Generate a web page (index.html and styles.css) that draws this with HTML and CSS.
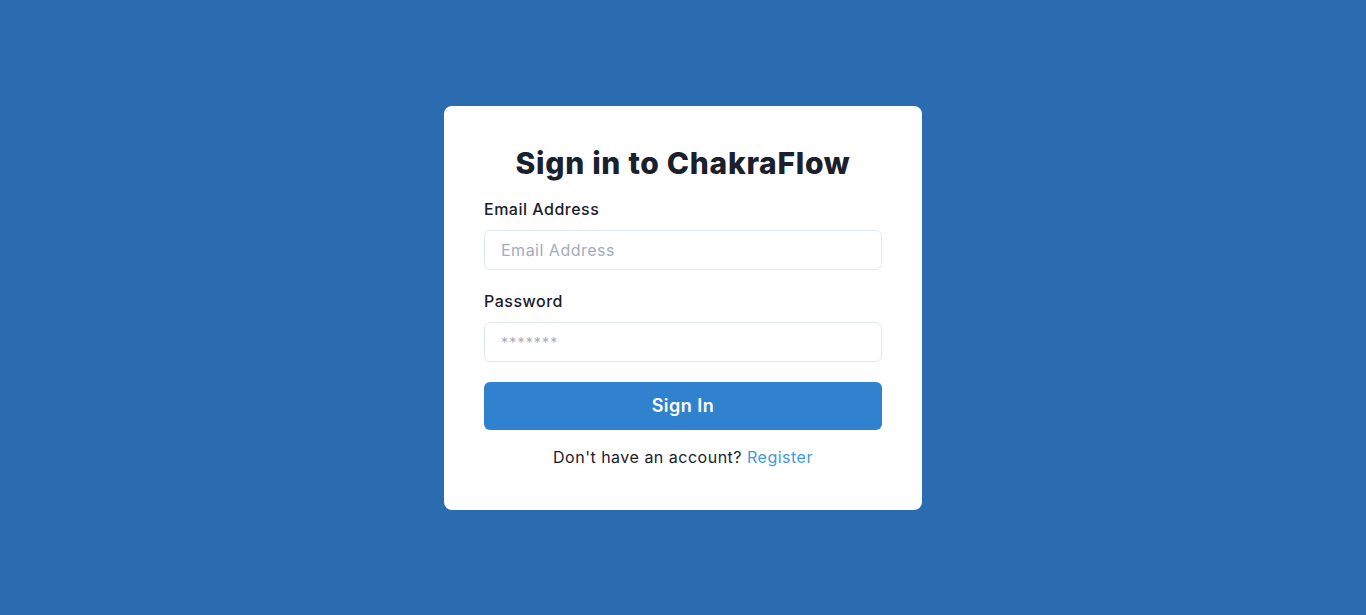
FILE: index.html
```html
<!DOCTYPE html>
<html lang="en">
<head>
<meta charset="utf-8">
<title>Sign in to ChakraFlow</title>
<link rel="stylesheet" href="styles.css">
</head>
<body>
<main class="page">
  <form class="card">
    <h1 class="title">Sign in to ChakraFlow</h1>
    <div class="field">
      <label class="label" for="email">Email Address</label>
      <input class="input" id="email" type="email" placeholder="Email Address">
    </div>
    <div class="field">
      <label class="label" for="password">Password</label>
      <input class="input input-pass" id="password" type="password" placeholder="*******">
    </div>
    <button class="btn" type="button">Sign In</button>
    <p class="footer">Don't have an account? <a class="link" href="#">Register</a></p>
  </form>
</main>
</body>
</html>
```
FILE: styles.css
```css
* { box-sizing: border-box; }
html, body { margin: 0; padding: 0; }
body {
  font-family: Inter, "Noto Sans", sans-serif;
  color: #1A202C;
  background: #2B6CB0;
  letter-spacing: 0.5px;
}
.page {
  min-height: 615px;
  display: flex;
  align-items: center;
  justify-content: center;
}
.card {
  width: 478px;
  background: #ffffff;
  border-radius: 8px;
  padding: 40px;
  display: flex;
  flex-direction: column;
}
.title {
  margin: -1px 0 17px;
  font-size: 30px;
  line-height: 36px;
  font-weight: 800;
  letter-spacing: 0.7px;
  text-align: center;
  color: #1A202C;
}
.field {
  display: flex;
  flex-direction: column;
  margin-bottom: 20px;
}
.label {
  font-size: 16px;
  line-height: 24px;
  font-weight: 500;
  margin: -1px 0 9px;
  color: #1A202C;
}
.input {
  height: 40px;
  border: 1px solid #E2E8F0;
  border-radius: 6px;
  padding: 0 16px;
  font-family: inherit;
  font-size: 16px;
  letter-spacing: 0.5px;
  color: #1A202C;
  outline: none;
}
.input::placeholder { color: #A0AEC0; }
.input-pass::placeholder { color: #A0AEC0; font-size: 14px; letter-spacing: 1.2px; }
.btn {
  height: 48px;
  border: 0;
  border-radius: 6px;
  background: #3182CE;
  color: #ffffff;
  font-family: inherit;
  font-size: 18px;
  font-weight: 600;
  letter-spacing: 0.5px;
  cursor: pointer;
}
.footer {
  margin: 15px 0 1px;
  font-size: 16px;
  line-height: 24px;
  text-align: center;
  color: #1A202C;
}
.link {
  color: #4299E1;
  text-decoration: none;
}
```
